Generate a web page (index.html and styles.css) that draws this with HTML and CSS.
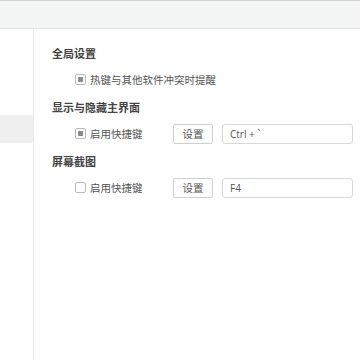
FILE: index.html
```html
<!DOCTYPE html>
<html lang="zh-CN">
<head>
  <meta charset="UTF-8" />
  <meta name="viewport" content="width=device-width, initial-scale=1.0"/>
  <title>快捷键设置</title>
  <link rel="stylesheet" href="styles.css">
</head>
<body>
  <div class="topbar"></div>
  <div class="main">
    <div class="sidebar">
      <div class="side-item active"></div>
    </div>

    <div class="content">
      <div class="section-title">全局设置</div>
      <div class="row">
        <label class="check"><span class="box checked"></span>热键与其他软件冲突时提醒</label>
      </div>

      <div class="section-title">显示与隐藏主界面</div>
      <div class="row">
        <label class="check"><span class="box checked"></span>启用快捷键</label>
        <button class="btn">设置</button>
        <div class="key-input">Ctrl + `</div>
      </div>

      <div class="section-title">屏幕截图</div>
      <div class="row">
        <label class="check"><span class="box"></span>启用快捷键</label>
        <button class="btn">设置</button>
        <div class="key-input">F4</div>
      </div>
    </div>
  </div>
</body>
</html>
```

FILE: styles.css
```css
body {
  margin: 0;
  font-family: "Noto Sans CJK SC", "Noto Sans", sans-serif;
  background: #fff;
  color: #555;
}
.topbar {
  height: 27px;
  background: #f3f4f4;
  border-top: 1px solid #cfcfcf;
  border-bottom: 1px solid #e6e6e6;
}
.main {
  display: flex;
  height: 331px;
}
.sidebar {
  width: 33px;
  border-right: 1px solid #ebebeb;
  padding-top: 86px;
}
.side-item {
  height: 28px;
}
.side-item.active {
  background: #efefef;
}
.content {
  flex: 1;
  padding: 10px 0 0 18px;
}
.section-title {
  height: 27px;
  display: flex;
  align-items: center;
  font-size: 11px;
  font-weight: bold;
  color: #444;
}
.row {
  height: 27px;
  display: flex;
  align-items: center;
  padding-left: 23px;
}
.check {
  display: flex;
  align-items: center;
  min-width: 98px;
  white-space: nowrap;
  font-size: 10.5px;
  color: #555;
}
.box {
  flex-shrink: 0;
  width: 9px;
  height: 9px;
  border: 1px solid #bbb;
  border-radius: 2px;
  margin-right: 4px;
  display: flex;
  align-items: center;
  justify-content: center;
  background: #fff;
}
.box.checked::after {
  content: "";
  width: 5px;
  height: 5px;
  background: #8c8c8c;
}
.btn {
  width: 40px;
  height: 20px;
  padding: 0;
  border: 1px solid #cfcfcf;
  border-radius: 2px;
  background: #fff;
  font-family: inherit;
  font-size: 10.5px;
  color: #555;
  margin-right: 9px;
}
.key-input {
  width: 122px;
  height: 18px;
  border: 1px solid #d8d8d8;
  border-radius: 3px;
  padding-left: 7px;
  display: flex;
  align-items: center;
  font-family: "Open Sans", sans-serif;
  font-size: 10px;
  color: #555;
}
```
